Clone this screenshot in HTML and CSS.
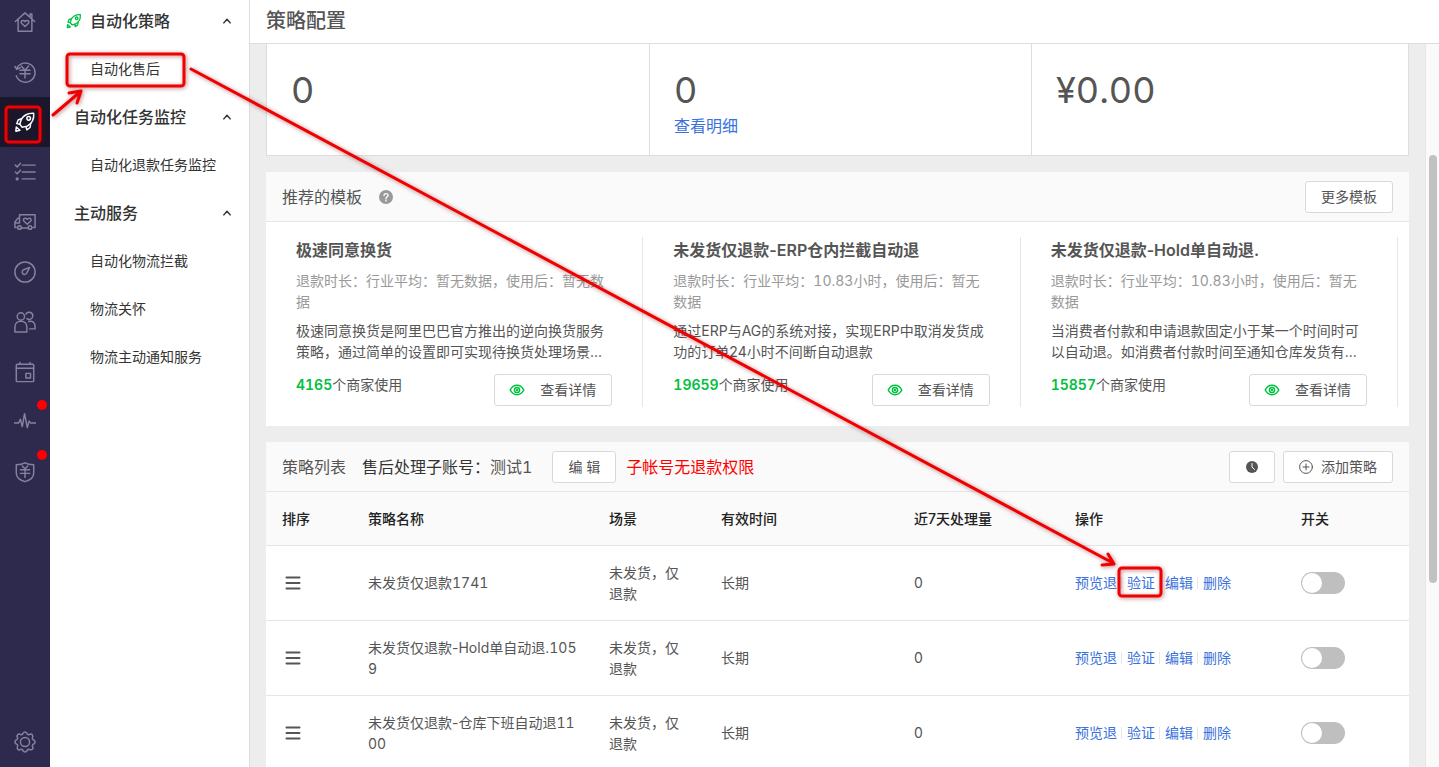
FILE: index.html
```html
<!DOCTYPE html>
<html lang="zh-CN">
<head>
    <meta charset="UTF-8">
    <meta name="viewport" content="width=device-width, initial-scale=1.0">
    <title>策略配置</title>
    <link rel="stylesheet" href="styles.css">
</head>
<body>
    <!-- shared icons -->
    <svg class="sprite" aria-hidden="true">
        <symbol id="rocket" viewBox="0 0 24 24">
            <path d="M21.500 2.500c-6-.3-10.500 1.500-13.500 6.500l-1.700 5.500 2.700 3.200 5.500-1.200c5.500-3 7.500-7.500 7-14z"/>
            <path d="M8 8.500L4.500 9.800 3 13.800l3.300.7M13 17l1 3.500 3.500-2.500.7-4.500M2.500 17.500L2 22l4.500-1z"/>
            <circle cx="16" cy="8" r="2"/>
        </symbol>
        <symbol id="arrow-up" viewBox="0 0 10 10">
            <path d="M2 7l3-3.500L8 7"/>
        </symbol>
        <symbol id="eye" viewBox="0 0 16 16">
            <path d="M1.200 8c1.500-3 3.800-4.700 6.800-4.700s5.300 1.700 6.800 4.700c-1.500 3-3.800 4.700-6.800 4.700S2.700 11 1.200 8z"/>
            <circle cx="8" cy="8" r="2.600"/>
            <circle cx="8" cy="8" r=".5"/>
        </symbol>
        <symbol id="drag" viewBox="0 0 16 16">
            <path d="M1.500 2.500h13M1.500 8h13M1.500 13.500h13"/>
        </symbol>
    </svg>

    <div class="app">
        <nav class="rail">
            <a href="#" class="rail-item" aria-label="首页">
                <svg class="rail-icon" viewBox="0 0 24 24"><path d="M1.500 11.500L12 2l10.500 9.500M4.500 9v13h15V9M17.500 6.500V3.200h2v5"/><path d="M12 17l-3.800-3.600c-1.500-2.400 1.800-4.300 3.800-1.800 2-2.500 5.300-.6 3.800 1.800z"/></svg>
            </a>
            <a href="#" class="rail-item" aria-label="退款">
                <svg class="rail-icon" viewBox="0 0 24 24"><path d="M3 8A10.500 10.500 0 1 1 2.500 16M1 6l2 3 3.800-1.600"/><path d="M8 5.500l4 4.500 4-4.500M6.500 10h11M6.500 14h11M12 10v8.500"/></svg>
            </a>
            <a href="#" class="rail-item active" aria-label="自动化策略">
                <svg class="rail-icon"><use href="#rocket"/></svg>
            </a>
            <a href="#" class="rail-item" aria-label="任务">
                <svg class="rail-icon" viewBox="0 0 24 24"><path d="M9 4.500h14M9 12h14M9 19.500h14M1.500 4.500l2 2L7 2.500M1.500 12l2 2L7 10"/><circle cx="3.500" cy="19.500" r="1"/></svg>
            </a>
            <a href="#" class="rail-item" aria-label="物流">
                <svg class="rail-icon" viewBox="0 0 24 24"><path d="M6 8V4h17v14h-2M6 8H4L1 12v6h1.500M6 8v5M2 13h4M8 18.500h7.500"/><circle cx="6" cy="18" r="2"/><circle cx="17.500" cy="18" r="2"/><path d="M14.500 14.500L10.700 11c-1.500-2.500 2-4.500 3.800-1.900 1.800-2.600 5.300-.6 3.800 1.900z"/></svg>
            </a>
            <a href="#" class="rail-item" aria-label="数据">
                <svg class="rail-icon" viewBox="0 0 24 24"><circle cx="12" cy="12" r="11"/><path d="M17 7l-7 2.800c-3.200 2.500 1.200 6.900 3.700 3.700z"/></svg>
            </a>
            <a href="#" class="rail-item" aria-label="客户">
                <svg class="rail-icon" viewBox="0 0 24 24"><circle cx="7.500" cy="6" r="4"/><path d="M1 23v-5.500c0-8.500 13-8.500 13 0V23zM13 3.500c1.500-3.500 7.500-2.500 7.500 1.700 0 3.600-4 5.200-6.400 3M16 11.500c4.500-1.500 7 1.500 7 5.500v2.500h-6"/></svg>
            </a>
            <a href="#" class="rail-item" aria-label="日程">
                <svg class="rail-icon" viewBox="0 0 24 24"><rect x="2.500" y="3.500" width="19" height="19" rx="1"/><path d="M2.500 8h19M6.500 1.500v2M17.500 1.500v2"/><rect x="13" y="13.500" width="5" height="5"/></svg>
            </a>
            <a href="#" class="rail-item" aria-label="监控">
                <svg class="rail-icon" viewBox="0 0 24 24"><path d="M0 13h5l2-4 2 8 2.500-14 3 15 2-7 1.500 2h6"/></svg>
                <span class="dot"></span>
            </a>
            <a href="#" class="rail-item" aria-label="安全">
                <svg class="rail-icon" viewBox="0 0 24 24"><path d="M12 2c3 1.700 6 2 9.500 2v9c0 4.500-4.500 8-9.500 9.500C7 21 2.500 17.500 2.500 13V4C6 4 9 3.700 12 2z"/><path d="M9 5.500l3 3 3-3M7 9.500h10M7 13.500h10M12 9v9"/></svg>
                <span class="dot"></span>
            </a>
            <a href="#" class="rail-item settings" aria-label="设置">
                <svg class="rail-icon" viewBox="0 0 24 24"><path d="M9.300 3.500Q10 1 12 1t2.700 2.500l1.400.6q2.500-1.500 3.800-.1t0 3.900l.6 1.400q2.500.7 2.500 2.700t-2.500 2.700l-.6 1.400q1.500 2.500.1 3.800t-3.900 0l-1.400.6Q14 23 12 23t-2.700-2.500l-1.400-.6q-2.500 1.500-3.800.1t0-3.900l-.6-1.400Q1 14 1 12t2.500-2.700l.6-1.400Q2.600 5.400 4 4t3.900.1z"/><circle cx="12" cy="12" r="5"/></svg>
            </a>
        </nav>

        <aside class="menu">
            <button type="button" class="menu-title"><svg class="menu-icon"><use href="#rocket"/></svg>自动化策略<svg class="caret"><use href="#arrow-up"/></svg></button>
            <a href="#" class="menu-link">自动化售后</a>
            <button type="button" class="menu-title">自动化任务监控<svg class="caret"><use href="#arrow-up"/></svg></button>
            <a href="#" class="menu-link">自动化退款任务监控</a>
            <button type="button" class="menu-title">主动服务<svg class="caret"><use href="#arrow-up"/></svg></button>
            <a href="#" class="menu-link">自动化物流拦截</a>
            <a href="#" class="menu-link">物流关怀</a>
            <a href="#" class="menu-link">物流主动通知服务</a>
        </aside>

        <main class="main">
            <header class="page-header">
                <h1>策略配置</h1>
            </header>
            <div class="scroller">
                <div class="content">
                    <section class="stats">
                        <div class="stat"><div class="stat-value num">0</div></div>
                        <div class="stat"><div class="stat-value num">0</div><a href="#">查看明细</a></div>
                        <div class="stat"><div class="stat-value num">¥0.00</div></div>
                    </section>

                    <section class="panel">
                        <div class="panel-header">
                            <h2>推荐的模板</h2>
                            <svg class="help" viewBox="0 0 14 14"><circle cx="7" cy="7" r="7"/><path d="M5 5.600c0-2.800 4.100-2.600 4.100-.2C9.100 6.800 7 6.900 7 8.400M7 9.900v1.200"/></svg>
                            <button type="button" class="btn push">更多模板</button>
                        </div>
                        <div class="templates">
                            <article class="template">
                                <h3>极速同意换货</h3>
                                <p class="duration">退款时长：行业平均：暂无数据，使用后：暂无数据</p>
                                <p class="desc">极速同意换货是阿里巴巴官方推出的逆向换货服务策略，通过简单的设置即可实现待换货处理场景...</p>
                                <div class="template-footer">
                                    <span><b class="num">4165</b>个商家使用</span>
                                    <button type="button" class="btn"><svg class="eye"><use href="#eye"/></svg>查看详情</button>
                                </div>
                            </article>
                            <article class="template">
                                <h3>未发货仅退款-ERP仓内拦截自动退</h3>
                                <p class="duration">退款时长：行业平均：<span class="num">10.83</span>小时，使用后：暂无数据</p>
                                <p class="desc">通过ERP与AG的系统对接，实现ERP中取消发货成功的订单24小时不间断自动退款</p>
                                <div class="template-footer">
                                    <span><b class="num">19659</b>个商家使用</span>
                                    <button type="button" class="btn"><svg class="eye"><use href="#eye"/></svg>查看详情</button>
                                </div>
                            </article>
                            <article class="template">
                                <h3>未发货仅退款-Hold单自动退.</h3>
                                <p class="duration">退款时长：行业平均：<span class="num">10.83</span>小时，使用后：暂无数据</p>
                                <p class="desc">当消费者付款和申请退款固定小于某一个时间时可以自动退。如消费者付款时间至通知仓库发货有...</p>
                                <div class="template-footer">
                                    <span><b class="num">15857</b>个商家使用</span>
                                    <button type="button" class="btn"><svg class="eye"><use href="#eye"/></svg>查看详情</button>
                                </div>
                            </article>
                        </div>
                    </section>

                    <section class="panel">
                        <div class="panel-header">
                            <h2>策略列表</h2>
                            <span class="account num"><strong>售后处理子账号：</strong>测试1</span>
                            <button type="button" class="btn num">编 辑</button>
                            <span class="warning">子帐号无退款权限</span>
                            <button type="button" class="btn push" aria-label="历史记录"><svg class="clock" viewBox="0 0 14 14"><circle cx="7" cy="7" r="6"/><path d="M7 3.500V7l2.500 2.500"/></svg></button>
                            <button type="button" class="btn add"><svg class="plus" viewBox="0 0 14 14"><circle cx="7" cy="7" r="6.400"/><path d="M7 4v6M4 7h6"/></svg>添加策略</button>
                        </div>
                        <table class="strategy-table">
                            <colgroup>
                                <col class="col-sort">
                                <col class="col-name">
                                <col class="col-scene">
                                <col class="col-time">
                                <col class="col-count">
                                <col class="col-actions">
                                <col class="col-switch">
                            </colgroup>
                            <thead>
                                <tr>
                                    <th>排序</th>
                                    <th>策略名称</th>
                                    <th>场景</th>
                                    <th>有效时间</th>
                                    <th>近7天处理量</th>
                                    <th>操作</th>
                                    <th>开关</th>
                                </tr>
                            </thead>
                            <tbody>
                                <tr>
                                    <td><svg class="drag"><use href="#drag"/></svg></td>
                                    <td>未发货仅退款<span class="num">1741</span></td>
                                    <td>未发货，仅退款</td>
                                    <td>长期</td>
                                    <td>0</td>
                                    <td><div class="actions"><a href="#">预览退</a><a href="#">验证</a><a href="#">编辑</a><a href="#">删除</a></div></td>
                                    <td><input type="checkbox" class="switch" aria-label="启用 未发货仅退款1741"></td>
                                </tr>
                                <tr>
                                    <td><svg class="drag"><use href="#drag"/></svg></td>
                                    <td>未发货仅退款-Hold单自动退.<span class="num">1059</span></td>
                                    <td>未发货，仅退款</td>
                                    <td>长期</td>
                                    <td>0</td>
                                    <td><div class="actions"><a href="#">预览退</a><a href="#">验证</a><a href="#">编辑</a><a href="#">删除</a></div></td>
                                    <td><input type="checkbox" class="switch" aria-label="启用 未发货仅退款-Hold单自动退.1059"></td>
                                </tr>
                                <tr>
                                    <td><svg class="drag"><use href="#drag"/></svg></td>
                                    <td>未发货仅退款-仓库下班自动退<span class="num">1100</span></td>
                                    <td>未发货，仅退款</td>
                                    <td>长期</td>
                                    <td>0</td>
                                    <td><div class="actions"><a href="#">预览退</a><a href="#">验证</a><a href="#">编辑</a><a href="#">删除</a></div></td>
                                    <td><input type="checkbox" class="switch" aria-label="启用 未发货仅退款-仓库下班自动退1100"></td>
                                </tr>
                            </tbody>
                        </table>
                    </section>
                </div>
                <div class="scrollbar"><div class="thumb"></div></div>
            </div>
        </main>
    </div>

    <!-- step by step guide drawn over the page -->
    <svg class="guide" width="1439" height="767" aria-hidden="true">
        <rect x="6" y="107" width="34" height="35" rx="3"/>
        <rect x="67" y="54" width="117" height="32" rx="3"/>
        <rect x="1119" y="568" width="42" height="28" rx="3"/>
        <path d="M53 115L80 92M69 93l12-2-4 12"/>
        <path d="M191 69L1113 563M1108 554l6 10-12 1"/>
    </svg>
</body>
</html>
```
FILE: styles.css
```css
* {
    margin: 0;
    padding: 0;
    box-sizing: border-box;
}

body {
    font-family: Inter, "Noto Sans CJK SC", sans-serif;
    font-size: 14px;
    line-height: 21px;
    color: #555;
    background: #ededed;
    overflow: hidden;
}

a {
    color: #3a72dc;
    text-decoration: none;
}

button {
    font: inherit;
    color: inherit;
    cursor: pointer;
}

svg {
    fill: none;
    stroke: currentColor;
    stroke-linecap: round;
    stroke-linejoin: round;
    flex: none;
}

.sprite {
    position: absolute;
    width: 0;
    height: 0;
}

.num {
    font-variant-numeric: tabular-nums;
}

.app {
    display: flex;
    height: 100vh;
}

/* icon rail */
.rail {
    display: flex;
    flex-direction: column;
    width: 50px;
    flex: none;
    background: #2e2a4e;
}

.rail-item {
    position: relative;
    display: flex;
    align-items: center;
    justify-content: center;
    height: 50px;
    flex: none;
    color: #85829f;
}

.rail-item:first-child {
    margin-top: -3px;
}

.rail-item.active {
    background: #1a172d;
    color: #fff;
}

.rail-icon {
    width: 22px;
    height: 22px;
    stroke-width: 1.6;
}

.settings {
    margin-top: auto;
}

.dot {
    position: absolute;
    top: 3px;
    right: 3px;
    width: 10px;
    height: 10px;
    border-radius: 50%;
    background: #f00;
}

/* sub menu */
.menu {
    width: 200px;
    flex: none;
    background: #fff;
    border-right: 1px solid #ddd;
}

.menu-title {
    display: flex;
    align-items: center;
    width: 100%;
    height: 48px;
    padding: 0 16px 0 24px;
    border: none;
    background: none;
    color: #333;
    font-size: 16px;
    font-weight: 500;
}

.menu-title:first-child {
    margin-top: -3px;
    padding-left: 16px;
}

.menu-icon {
    width: 16px;
    height: 16px;
    margin-right: 8px;
    stroke: #00c040;
    stroke-width: 2;
}

.caret {
    width: 12px;
    height: 12px;
    margin-left: auto;
    stroke-width: 1.2;
    stroke-linecap: butt;
}

.menu-link {
    display: block;
    padding-left: 40px;
    line-height: 48px;
    color: #333;
}

/* main */
.main {
    flex: 1;
    min-width: 0;
    display: flex;
    flex-direction: column;
}

.page-header {
    height: 44px;
    flex: none;
    padding: 0 16px;
    background: #fff;
    border-bottom: 1px solid #ddd;
}

.page-header h1 {
    font-size: 20px;
    font-weight: 500;
    line-height: 42px;
}

.scroller {
    flex: 1;
    min-height: 0;
    display: flex;
    overflow: hidden;
}

.content {
    flex: 1;
    min-width: 0;
    padding: 0 16px;
}

.scrollbar {
    width: 14px;
    padding: 111px 2px 0 3px;
    background: #fafafa;
    border-left: 1px solid #e6e6e6;
}

.thumb {
    width: 8px;
    height: 428px;
    border-radius: 4px;
    background: #c1c1c1;
}

.stats {
    display: grid;
    grid-template-columns: 383fr 382fr 376fr;
    height: 112px;
    background: #fff;
    border: 1px solid #ddd;
    border-top: none;
}

.stat {
    padding: 22px 24px 0;
    border-right: 1px solid #ddd;
    font-size: 16px;
}

.stat:last-child {
    border-right: none;
}

.stat-value {
    margin-bottom: 2px;
    font-size: 36px;
    line-height: 48px;
}

.panel {
    margin-top: 16px;
    background: #fff;
}

.panel-header {
    display: flex;
    align-items: center;
    height: 50px;
    padding: 0 16px;
    background: #fafafa;
    border-bottom: 1px solid #e6e6e6;
    font-size: 16px;
    line-height: 22px;
}

.panel-header h2 {
    font-size: 16px;
    font-weight: 400;
}

.help {
    width: 14px;
    height: 14px;
    margin-left: 17px;
    stroke: #fff;
    stroke-width: 1.3;
}

.help circle {
    fill: #999;
    stroke: none;
}

.push {
    margin-left: auto;
}

.btn {
    display: flex;
    align-items: center;
    height: 32px;
    padding: 0 15px;
    border: 1px solid #d9d9d9;
    border-radius: 3px;
    background: #fff;
    font-size: 14px;
    line-height: 20px;
}

.account {
    margin: 0 20px 0 16px;
}

.account strong {
    color: #333;
    font-weight: 400;
}

.warning {
    margin-left: 10px;
    color: #f00;
}

.clock,
.plus {
    width: 14px;
    height: 14px;
}

.clock {
    stroke: #fff;
}

.clock circle {
    fill: #555;
    stroke: none;
}

.add {
    margin-left: 8px;
}

.plus {
    margin-right: 8px;
}

/* templates */
.templates {
    display: grid;
    grid-template-columns: repeat(3, 1fr);
    padding: 15px 11px 19px 0;
}

.template {
    height: 170px;
    padding: 0 30px;
    border-right: 1px solid #e6e6e6;
}

.template h3 {
    font-size: 16px;
    font-weight: 600;
    line-height: 26px;
}

.duration {
    margin-top: 7px;
    color: #999;
}

.desc {
    margin-top: 8px;
}

.template-footer {
    display: flex;
    justify-content: space-between;
    margin-top: 12px;
}

.template-footer b {
    color: #00c040;
    font-weight: 600;
}

.eye {
    width: 16px;
    height: 16px;
    margin: 0 15px 0 -1px;
    stroke: #00c040;
    stroke-width: 1.5;
}

/* table */
.strategy-table {
    width: 100%;
    table-layout: fixed;
    border-collapse: separate;
    border-spacing: 0;
}

.col-sort { width: 86px; }
.col-name { width: 241px; }
.col-scene { width: 112px; }
.col-time { width: 193px; }
.col-count { width: 161px; }
.col-actions { width: 226px; }

th,
td {
    padding: 0 16px;
    text-align: left;
    vertical-align: middle;
    border-bottom: 1px solid #e6e6e6;
    word-break: break-all;
}

th {
    height: 54px;
    background: #fafafa;
    color: #222;
    font-weight: 500;
}

td {
    height: 75px;
    padding-bottom: 1px;
}

.drag {
    display: block;
    width: 16px;
    height: 16px;
    margin-left: 3px;
    stroke-width: 2;
}

.actions {
    display: flex;
    align-items: center;
}

.actions a + a::before {
    content: "";
    display: inline-block;
    width: 1px;
    height: 12px;
    margin: 0 5px 0 4px;
    background: #e6e6e6;
    vertical-align: -1px;
}

.switch {
    display: block;
    appearance: none;
    width: 44px;
    height: 22px;
    padding: 1px;
    border-radius: 11px;
    background: #bfbfbf;
    cursor: pointer;
}

.switch::before {
    content: "";
    display: block;
    width: 20px;
    height: 20px;
    border-radius: 50%;
    background: #fff;
}

.switch:checked {
    background: #00c040;
}

.switch:checked::before {
    margin-left: auto;
}

/* guide */
.guide {
    position: absolute;
    top: 0;
    left: 0;
    pointer-events: none;
    stroke: #f00000;
    stroke-width: 3;
    filter: drop-shadow(1px 1px 2px rgba(120, 0, 0, 0.5));
}
```
